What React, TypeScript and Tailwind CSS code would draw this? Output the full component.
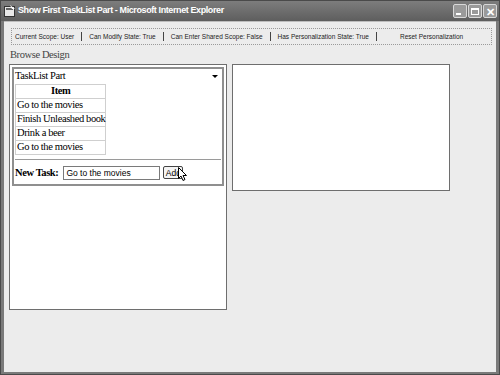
import React from 'react';

const tasks = ['Go to the movies', 'Finish Unleashed book', 'Drink a beer', 'Go to the movies'];

const statusItems = [
  'Current Scope: User',
  'Can Modify State: True',
  'Can Enter Shared Scope: False',
  'Has Personalization State: True',
];

const serif = { fontFamily: '"Liberation Serif", "Times New Roman", serif' };
const sans = { fontFamily: '"Liberation Sans", Arial, sans-serif' };

const IeIcon: React.FC = () => (
  <svg width="12" height="12" viewBox="0 0 12 12">
    <rect x="0.5" y="1.5" width="10" height="10" fill="#e8e8e8" stroke="#333" />
    <rect x="2" y="3" width="7" height="2" fill="#666" />
    <path d="M6 0 L11 4 L8 4 Z" fill="#fff" />
  </svg>
);

const Cursor: React.FC = () => (
  <svg width="10" height="15" viewBox="0 0 10 15" className="absolute left-[178px] top-[167px]">
    <path d="M0.5 0.5 L0.5 11.5 L3 9 L5 13.5 L7 12.5 L5 8.5 L8.5 8.5 Z" fill="#fff" stroke="#000" strokeWidth="1" />
  </svg>
);

const App: React.FC = () => {
  return (
    <div className="relative w-[500px] h-[375px] bg-[#4a4a4a] p-[1px] overflow-hidden">
      <div className="flex flex-col w-full h-full bg-[#7a7a7a]">
        {/* title bar */}
        <div className="flex items-center h-[20px] pl-[3px] pr-[2px] bg-gradient-to-b from-[#7d7d7d] to-[#5e5e5e]">
          <IeIcon />
          <span className="ml-[2px] text-white font-bold text-[9px] tracking-[-0.4px]" style={sans}>
            Show First TaskList Part - Microsoft Internet Explorer
          </span>
          <div className="ml-auto flex gap-[1px]">
            <div className="w-[14px] h-[14px] rounded-[2px] border border-[#d8d8d8] bg-[#9a9a9a] flex items-end justify-start p-[2px]">
              <div className="w-[5px] h-[2px] bg-white" />
            </div>
            <div className="w-[14px] h-[14px] rounded-[2px] border border-[#d8d8d8] bg-[#9a9a9a] flex items-center justify-center">
              <div className="w-[8px] h-[7px] border border-white border-t-2" />
            </div>
            <div className="w-[14px] h-[14px] rounded-[2px] border border-[#d8d8d8] bg-[#9a9a9a] flex items-center justify-center text-white text-[11px] font-bold leading-none">
              ✕
            </div>
          </div>
        </div>

        {/* content */}
        <div className="flex-1 mx-[3px] mb-[2px] bg-[#ececec] border-t border-[#bdbdbd] flex flex-col">
          <div
            className="mt-[6px] ml-[7px] w-[481px] h-[17px] border border-dotted border-[#9a9a9a] flex items-center text-[6.5px] text-[#222]"
            style={sans}
          >
            {statusItems.map((s, i) => (
              <React.Fragment key={i}>
                <span className={i === 0 ? 'ml-[3px]' : ''}>{s}</span>
                <span className="mx-[7px] w-[1px] h-[9px] bg-[#444]" />
              </React.Fragment>
            ))}
            <span className="ml-[16px]">Reset Personalization</span>
          </div>

          <div className="ml-[6px] mt-[3px] text-[10.5px] tracking-[-0.4px] text-[#444] leading-[13px]" style={serif}>
            Browse Design
          </div>

          <div className="flex items-start mt-[3px] ml-[5px] gap-[5px]">
            {/* left zone */}
            <div className="w-[218px] h-[246px] border border-[#6e6e6e] bg-white p-[2px]">
              <div className="border-2 border-[#8f8f8f] bg-white pb-[3px] tracking-[-0.4px]" style={serif}>
                <div className="flex items-center justify-between h-[14px] pl-[1px] pr-[4px] text-[10.5px] text-black">
                  <span>TaskList Part</span>
                  <span className="w-0 h-0 border-l-[3px] border-r-[3px] border-t-[3px] border-l-transparent border-r-transparent border-t-black" />
                </div>
                <table className="ml-[1px] mt-[1px] border-collapse text-[10.5px] text-black">
                  <thead>
                    <tr>
                      <th className="h-[14px] w-[89px] border border-[#cfcfcf] font-bold text-center leading-none">Item</th>
                    </tr>
                  </thead>
                  <tbody>
                    {tasks.map((t, i) => (
                      <tr key={i}>
                        <td className="h-[14px] border border-[#cfcfcf] pl-[1px] leading-none whitespace-nowrap">{t}</td>
                      </tr>
                    ))}
                  </tbody>
                </table>
                <div className="mx-[1px] mt-[4px] h-[1px] bg-[#9a9a9a]" />
                <div className="flex items-center mt-[5px] pl-[1px]">
                  <span className="text-[10.5px] font-bold text-black">New Task:</span>
                  <div className="ml-[5px] w-[97px] h-[14px] border border-[#7a7a7a] bg-white text-[8.5px] tracking-normal pl-[2px] flex items-center" style={sans}>
                    Go to the movies
                  </div>
                  <div className="ml-[3px] w-[20px] h-[13px] border border-[#444] rounded-[2px] bg-[#f4f4f4] text-[8.5px] tracking-normal flex items-center justify-center" style={sans}>
                    Add
                  </div>
                </div>
              </div>
            </div>

            {/* right zone */}
            <div className="w-[218px] h-[127px] border border-[#6e6e6e] bg-white" />
          </div>
        </div>
      </div>
      <Cursor />
    </div>
  );
};

export default App;
